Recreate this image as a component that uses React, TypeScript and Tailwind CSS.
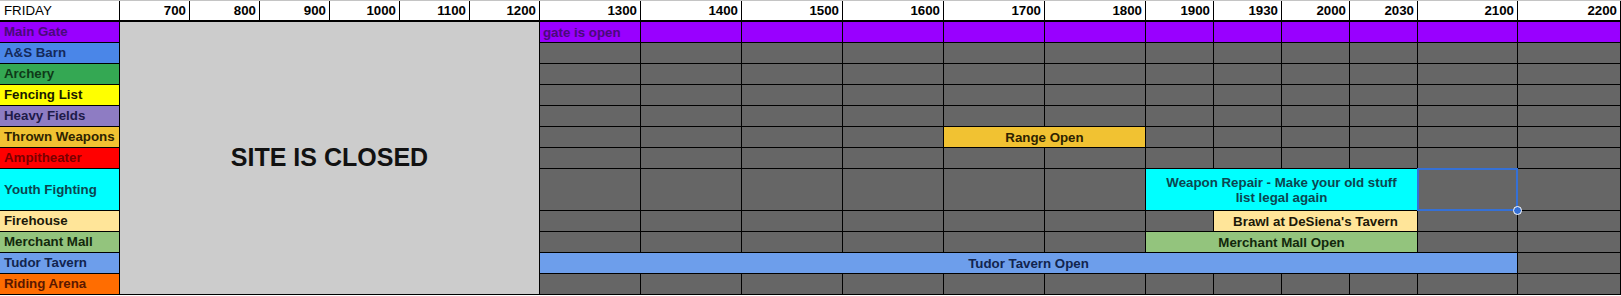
import React from "react"

type Seg = {
  span: number
  bg: string
  text?: string
  color?: string
  left?: boolean
  wrap?: boolean
  selected?: boolean
}

type Row = {
  label: string
  bg: string
  color: string
  tall?: boolean
  segs: Seg[]
}

const GREY = "bg-[#666666]"

const spanClass: Record<number, string> = {
  1: "col-span-1",
  2: "col-span-2",
  3: "col-span-3",
  4: "col-span-4",
  11: "col-span-11",
}

const hours = [
  "700", "800", "900", "1000", "1100", "1200",
  "1300", "1400", "1500", "1600", "1700", "1800",
  "1900", "1930", "2000", "2030", "2100", "2200",
]

const greys = (n: number): Seg[] => Array.from({ length: n }, () => ({ span: 1, bg: GREY }))

const rows: Row[] = [
  {
    label: "Main Gate",
    bg: "bg-[#9900ff]",
    color: "text-[#4a0a7a]",
    segs: [
      { span: 1, bg: "bg-[#9900ff]", text: "gate is open", color: "text-[#4a0a7a]", left: true },
      ...Array.from({ length: 11 }, () => ({ span: 1, bg: "bg-[#9900ff]" })),
    ],
  },
  { label: "A&S Barn", bg: "bg-[#4a86e8]", color: "text-[#14295a]", segs: greys(12) },
  { label: "Archery", bg: "bg-[#34a853]", color: "text-[#0f3a18]", segs: greys(12) },
  { label: "Fencing List", bg: "bg-[#ffff00]", color: "text-[#1a1a00]", segs: greys(12) },
  { label: "Heavy Fields", bg: "bg-[#8e7cc3]", color: "text-[#1e1a48]", segs: greys(12) },
  {
    label: "Thrown Weapons",
    bg: "bg-[#f1c232]",
    color: "text-[#2e2200]",
    segs: [
      ...greys(4),
      { span: 2, bg: "bg-[#f1c232]", text: "Range Open", color: "text-[#2e2200]" },
      ...greys(6),
    ],
  },
  { label: "Ampitheater", bg: "bg-[#ff0000]", color: "text-[#7a0000]", segs: greys(12) },
  {
    label: "Youth Fighting",
    bg: "bg-[#00ffff]",
    color: "text-[#0c4650]",
    tall: true,
    segs: [
      ...greys(6),
      {
        span: 4,
        bg: "bg-[#00ffff]",
        text: "Weapon Repair - Make your old stuff",
        color: "text-[#0c4650]",
        wrap: true,
      },
      { span: 1, bg: GREY, selected: true },
      ...greys(1),
    ],
  },
  {
    label: "Firehouse",
    bg: "bg-[#ffe599]",
    color: "text-[#1c1808]",
    segs: [
      ...greys(7),
      { span: 3, bg: "bg-[#ffe599]", text: "Brawl at DeSiena's Tavern", color: "text-[#1c1808]" },
      ...greys(2),
    ],
  },
  {
    label: "Merchant Mall",
    bg: "bg-[#93c47d]",
    color: "text-[#12280c]",
    segs: [
      ...greys(6),
      { span: 4, bg: "bg-[#93c47d]", text: "Merchant Mall Open", color: "text-[#12280c]" },
      ...greys(2),
    ],
  },
  {
    label: "Tudor Tavern",
    bg: "bg-[#6d9eeb]",
    color: "text-[#12244e]",
    segs: [
      { span: 11, bg: "bg-[#6d9eeb]", text: "Tudor Tavern Open", color: "text-[#12244e]" },
      ...greys(1),
    ],
  },
  { label: "Riding Arena", bg: "bg-[#ff6d01]", color: "text-[#5a1800]", segs: greys(12) },
]

function Cell({ seg }: { seg: Seg }) {
  return (
    <div
      className={clsxLite(
        spanClass[seg.span],
        seg.bg,
        seg.color,
        "relative flex items-center overflow-visible font-bold leading-[15px]",
        seg.left ? "justify-start pl-[3px] whitespace-nowrap" : "justify-center text-center",
        seg.selected ? "z-10" : ""
      )}
    >
      {seg.wrap ? (
        <span>
          {seg.text}
          <br />
          list legal again
        </span>
      ) : (
        seg.text && <span className="whitespace-nowrap">{seg.text}</span>
      )}
      {seg.selected && (
        <>
          <div className="absolute -inset-px border-2 border-[#3570d6]" />
          <div className="absolute -right-[5px] -bottom-[5px] h-[9px] w-[9px] rounded-full border border-white bg-[#3570d6]" />
        </>
      )}
    </div>
  )
}

function clsxLite(...parts: string[]) {
  return parts.filter(Boolean).join(" ")
}

export default function App() {
  return (
    <div className="w-[1621px] border-t border-[#c4c4c4] bg-white font-['Liberation_Sans',Arial,sans-serif] text-[13.3px] text-black">
      <div className="grid grid-cols-[119px_repeat(6,69px)_repeat(6,100px)_repeat(4,67px)_99px_102px] grid-rows-[20px_repeat(7,20px)_41px_repeat(4,20px)] gap-px bg-black pr-px pb-px">
        <div className="flex items-center border-b border-black bg-white pl-[4px]">FRIDAY</div>
        {hours.map((h) => (
          <div
            key={h}
            className="flex items-center justify-end border-b border-black bg-white pr-[3px] font-bold"
          >
            {h}
          </div>
        ))}

        {rows.map((row, i) => (
          <React.Fragment key={row.label}>
            <div
              className={clsxLite(
                row.bg,
                row.color,
                "flex items-center overflow-hidden whitespace-nowrap pl-[4px] font-bold"
              )}
            >
              {row.label}
            </div>
            {i === 0 && (
              <div className="col-span-6 row-span-12 flex items-center justify-center bg-[#cccccc] text-[25px] font-bold text-[#111111]">
                SITE IS CLOSED
              </div>
            )}
            {row.segs.map((seg, j) => (
              <Cell key={j} seg={seg} />
            ))}
          </React.Fragment>
        ))}
      </div>
    </div>
  )
}
